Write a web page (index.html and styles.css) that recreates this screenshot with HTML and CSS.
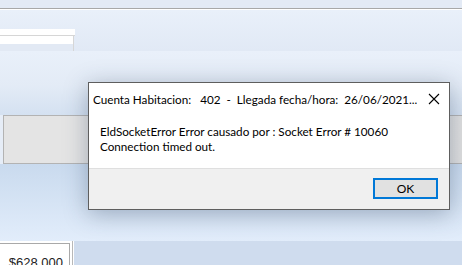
FILE: index.html
```html
<!DOCTYPE html>
<html>
<head>
<meta charset="utf-8">
<link rel="stylesheet" href="styles.css">
</head>
<body>
<div class="screen">
  <div class="topbar"></div>
  <div class="rule"></div>
  <div class="header">
    <div class="tab">
      <div class="tab-top"></div>
      <div class="tab-body"><div class="tab-inner"></div></div>
    </div>
  </div>
  <div class="band"></div>
  <div class="panel"></div>
  <div class="lower"></div>
  <div class="bottom">
    <div class="grid-cell">
      <div class="grid-inner"><span class="amount">$628,000</span></div>
    </div>
    <div class="bottom-rest"></div>
  </div>

  <div class="dialog">
    <div class="dialog-title">
      <span class="title-text">Cuenta Habitacion:   402  -  Llegada fecha/hora:  26/06/2021...</span>
      <svg class="close" width="12" height="12" viewBox="0 0 12 12"><path d="M1 1 L11 11 M11 1 L1 11" stroke="#000" stroke-width="1.1" fill="none"/></svg>
    </div>
    <div class="dialog-body">
      <p class="msg">EldSocketError Error causado por : Socket Error # 10060<br>Connection timed out.</p>
    </div>
    <div class="dialog-footer">
      <button class="ok">OK</button>
    </div>
  </div>
</div>
</body>
</html>
```
FILE: styles.css
```css
html, body {
  margin: 0;
  padding: 0;
}
body {
  width: 462px;
  height: 265px;
  overflow: hidden;
  font-family: Lato, "Liberation Sans", sans-serif;
}
.screen {
  position: relative;
  width: 462px;
  height: 265px;
  overflow: hidden;
  background: #e6edf7;
}
.topbar {
  height: 8px;
  background: #e3eaf5;
}
.rule {
  height: 1px;
  background: #a8a8a8;
  border-bottom: 1px solid #ffffff;
}
.header {
  height: 41px;
  background: linear-gradient(#e9f0fa, #e1e9f5);
  padding-top: 19px;
  box-sizing: border-box;
}
.tab {
  width: 74px;
}
.tab-top {
  height: 6px;
  background: #ffffff;
  border-bottom: 1px solid #d6d6d6;
  width: 75px;
}
.tab-body {
  height: 15px;
  background: #ffffff;
  border-right: 1px solid #d6d6d6;
  padding-top: 8px;
  box-sizing: border-box;
}
.tab-inner {
  height: 7px;
  width: 73px;
  background: #e2e9f4;
}
.band {
  height: 64px;
  background: linear-gradient(#e9f0fa 0%, #e3ebf6 55%, #d4e1f1 100%);
}
.panel {
  height: 49px;
  margin-left: 3px;
  box-sizing: border-box;
  border: 1px solid #b3b3b3;
  border-right: none;
  background: linear-gradient(90deg, #e4e4e4 0%, #e4e4e4 70%, #e0e0e0 100%);
}
.lower {
  height: 77px;
  background: linear-gradient(#c9daee, #e2edfb);
}
.bottom {
  display: flex;
  height: 24px;
}
.grid-cell {
  width: 73px;
  background: #ffffff;
  border-right: 1px solid #b8b8b8;
  padding-top: 2px;
  box-sizing: border-box;
}
.grid-inner {
  height: 30px;
  width: 70px;
  box-sizing: border-box;
  border-top: 1px solid #a9a9a9;
  border-right: 1px solid #a9a9a9;
  text-align: right;
  padding-right: 6px;
  padding-top: 12px;
  font-family: "Liberation Sans", sans-serif;
  font-size: 13px;
  line-height: 14px;
  color: #222;
}
.bottom-rest {
  flex: 1;
  background: #cfdcee;
  border-left: 1px solid #ffffff;
}

/* dialog overlay */
.dialog {
  position: absolute;
  left: 88px;
  top: 82px;
  width: 362px;
  height: 128px;
  box-sizing: border-box;
  border: 1px solid #5e5e5e;
  background: #ffffff;
  box-shadow: 0 4px 22px rgba(40, 60, 90, 0.35);
  display: flex;
  flex-direction: column;
}
.dialog-title {
  height: 30px;
  display: flex;
  align-items: center;
  justify-content: space-between;
  padding-left: 4px;
  padding-right: 9px;
  padding-top: 1px;
  box-sizing: border-box;
}
.title-text {
  white-space: pre;
  font-size: 11.7px;
  color: #000;
  overflow: hidden;
}
.close {
  display: block;
  flex-shrink: 0;
}
.dialog-body {
  flex: 1;
  padding-left: 11px;
  padding-top: 11px;
  box-sizing: border-box;
}
.msg {
  margin: 0;
  font-size: 11.7px;
  line-height: 15px;
  color: #000;
}
.dialog-footer {
  height: 41px;
  background: #f0f0f0;
  border-top: 1px solid #dfdfdf;
  box-sizing: border-box;
  display: flex;
  justify-content: flex-end;
  align-items: flex-start;
  padding-top: 9px;
  padding-right: 11px;
}
.ok {
  width: 65px;
  height: 21px;
  margin: 0;
  padding: 0;
  border: 2px solid #0078d7;
  background: #e1e1e1;
  font-family: Lato, "Liberation Sans", sans-serif;
  font-size: 12px;
  color: #000;
}
```
